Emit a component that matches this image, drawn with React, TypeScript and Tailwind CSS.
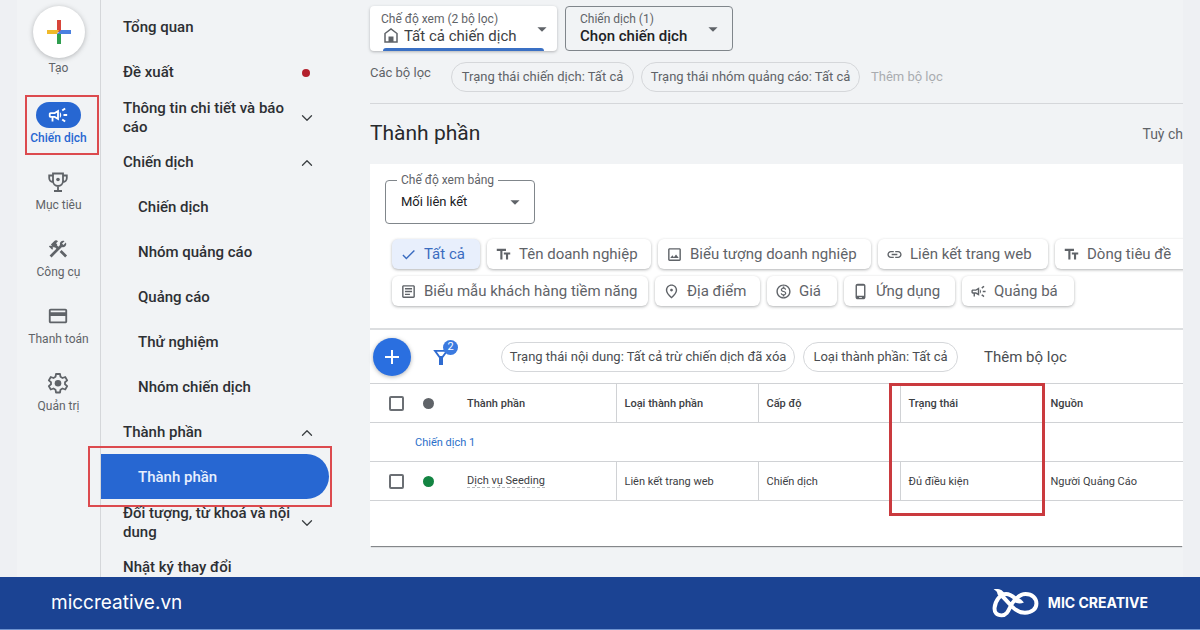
import type { ReactNode } from 'react';
import {
  MdAdd, MdArrowDropDown, MdCheck, MdConstruction, MdLink, MdOutlineArticle, MdOutlineCampaign, MdOutlineCreditCard,
  MdOutlineImage, MdOutlineMonetizationOn, MdOutlinePhoneAndroid, MdOutlinePlace, MdTextFields,
} from 'react-icons/md';
import { ChevronDown, ChevronUp } from 'lucide-react';

function TrophyIcon() {
  return (
    <svg viewBox="0 0 24 24" className="h-6 w-6" fill="none" stroke="currentColor" strokeWidth="1.800">
      <path d="M7 3.500h10V11a5 5 0 0 1-10 0V3.500zM7 5.500H3.200V8A4 4 0 0 0 7 12M17 5.500h3.800V8A4 4 0 0 1 17 12M12 16v5M8 21h8" />
      <circle cx="12" cy="9.500" r="1.800" fill="currentColor" stroke="none" />
    </svg>
  );
}

function GearIcon() {
  return (
    <svg viewBox="0 0 24 24" className="h-6 w-6" fill="none" stroke="currentColor" strokeWidth="1.800" strokeLinejoin="round">
      <path d="M10 3h4l.5 2.800 2 1.200 2.700-1 2 3.400-2.200 1.800v2.100l2.200 1.800-2 3.400-2.700-1-2 1.200L14 21.500h-4l-.5-2.800-2-1.200-2.700 1-2-3.400L5 13.300v-2.100L2.800 9.400l2-3.400 2.700 1 2-1.200z" />
      <circle cx="12" cy="12.200" r="3.300" fill="currentColor" stroke="none" />
    </svg>
  );
}

function HomeIcon() {
  return (
    <svg viewBox="0 0 14 15" className="h-[15px] w-[14px] text-[#5f6368]" fill="none" stroke="currentColor" strokeWidth="1.500">
      <path d="M1 5.500 7 1l6 4.500V14H1z" />
      <path d="M4.500 14V8.500h5V14z" fill="currentColor" stroke="none" />
    </svg>
  );
}

function FunnelIcon() {
  return (
    <svg viewBox="0 0 20 20" className="h-5 w-5" fill="none" stroke="currentColor" strokeWidth="1.800">
      <path d="M4 3.900h12L11.500 10h-3z" />
      <path d="M8 9h4v9H8z" fill="currentColor" stroke="none" />
    </svg>
  );
}

function GooglePlus() {
  return (
    <svg viewBox="0 0 24 24" className="h-6 w-6">
      <path d="M10 0h4v12h-4z" fill="#d8453a" />
      <path d="M0 10h12l-2 4H0z" fill="#f0b92a" />
      <path d="M10 14l4-2v12h-4z" fill="#2f9e4f" />
      <path d="M14 10h10v4H10z" fill="#4a80e0" />
    </svg>
  );
}

function MicLogo() {
  return (
    <svg viewBox="0 0 141 88" className="h-[29px] w-[47px]" fill="none" stroke="#fff" strokeWidth="12" strokeLinecap="round">
      <path d="M22 14C34 24 47 40 61 54c13 13 24 18 38 18 22 0 35-12 35-28S121 15 101 15C82 15 71 28 60 44 50 62 46 80 28 80 13 80 6 71 7 57 9 36 24 15 42 15c12 0 20 7 28 14" />
      <path d="M4 1c16-3 30 2 34 16-12 3-20 0-23-6C13 7 9 4 4 1z" fill="#fff" stroke="none" />
      <path d="M64 22c14 4 25 10 32 19-11 5-23 4-34-5z" fill="#fff" stroke="none" />
    </svg>
  );
}

const railItems: { label: string; icon: ReactNode; active?: boolean }[] = [
  { label: 'Chiến dịch', icon: <MdOutlineCampaign className="h-[22px] w-[22px]" />, active: true },
  { label: 'Mục tiêu', icon: <TrophyIcon /> },
  { label: 'Công cụ', icon: <MdConstruction className="h-[22px] w-[22px]" /> },
  { label: 'Thanh toán', icon: <MdOutlineCreditCard className="h-[22px] w-[22px]" /> },
  { label: 'Quản trị', icon: <GearIcon /> },
];

const menuItems: { label: string; sub?: boolean; dot?: boolean; open?: boolean; active?: boolean }[] = [
  { label: 'Tổng quan' },
  { label: 'Đề xuất', dot: true },
  { label: 'Thông tin chi tiết và báo cáo', open: false },
  { label: 'Chiến dịch', open: true },
  { label: 'Chiến dịch', sub: true },
  { label: 'Nhóm quảng cáo', sub: true },
  { label: 'Quảng cáo', sub: true },
  { label: 'Thử nghiệm', sub: true },
  { label: 'Nhóm chiến dịch', sub: true },
  { label: 'Thành phần', open: true },
  { label: 'Thành phần', sub: true, active: true },
  { label: 'Đối tượng, từ khoá và nội dung', open: false },
  { label: 'Nhật ký thay đổi' },
];

const assetRows = [
  [
    { label: 'Tất cả', icon: MdCheck, width: 'w-[88px]', active: true },
    { label: 'Tên doanh nghiệp', icon: MdTextFields, width: 'w-[164px]' },
    { label: 'Biểu tượng doanh nghiệp', icon: MdOutlineImage, width: 'w-[213px]' },
    { label: 'Liên kết trang web', icon: MdLink, width: 'w-[170px]' },
    { label: 'Dòng tiêu đề', icon: MdTextFields, width: 'w-[140px]' },
  ],
  [
    { label: 'Biểu mẫu khách hàng tiềm năng', icon: MdOutlineArticle, width: 'w-[256px]' },
    { label: 'Địa điểm', icon: MdOutlinePlace, width: 'w-[105px]' },
    { label: 'Giá', icon: MdOutlineMonetizationOn, width: 'w-[70px]' },
    { label: 'Ứng dụng', icon: MdOutlinePhoneAndroid, width: 'w-[111px]' },
    { label: 'Quảng bá', icon: MdOutlineCampaign, width: 'w-[112px]' },
  ],
];

function Rail() {
  return (
    <nav className="flex w-[84px] shrink-0 flex-col items-center border-r border-[#d5d7da] bg-[#f1f3f5] pt-1.5 text-xs font-[450] text-[#5f6368]">
      <button className="mb-6 flex flex-col items-center">
        <span className="flex h-[52px] w-[52px] items-center justify-center rounded-full bg-white shadow-[0_1px_5px_rgba(60,64,67,0.35)]">
          <GooglePlus />
        </span>
        <span className="leading-5">Tạo</span>
      </button>
      <div className="flex flex-col items-center gap-[21px]">
        {railItems.map((item) => (
          <a key={item.label} href="#" className="relative flex flex-col items-center whitespace-nowrap">
            <span className={item.active ? 'flex h-[26px] w-[45px] items-center justify-center rounded-full bg-[#2767d2] text-white' : 'flex h-[26px] items-center'}>{item.icon}</span>
            <span className={item.active ? 'leading-5 font-medium text-[#2767d2]' : 'leading-5'}>{item.label}</span>
            {item.active && <span className="pointer-events-none absolute -top-[7px] -right-3 -bottom-[7px] w-[74px] border-2 border-[#dc4a4e]" />}
          </a>
        ))}
      </div>
    </nav>
  );
}

function SideMenu() {
  return (
    <nav className="w-[269px] shrink-0 bg-[#f1f3f5] pt-1 pr-[41px] text-[15px] leading-[19px] font-medium text-[#2d2f33]">
      {menuItems.map((item, i) => (
        <a
          key={i}
          href="#"
          className={`relative flex h-[45px] items-center justify-between pt-0.5 pr-3 ${item.sub ? 'pl-[37px]' : 'pl-[22px]'} ${item.active ? 'rounded-r-full bg-[#2767d2] text-[#e8f0fe]' : ''}`}
        >
          <span className={item.sub ? '' : 'w-[170px]'}>{item.label}</span>
          {item.dot && <span className="mr-[7px] h-2 w-2 rounded-full bg-[#b3202c]" />}
          {item.open === true && <ChevronUp className="h-[18px] w-5 text-[#3c4043]" strokeWidth={1.75} />}
          {item.open === false && <ChevronDown className="h-[18px] w-5 text-[#3c4043]" strokeWidth={1.75} />}
          {item.active && <span className="pointer-events-none absolute -top-2 -right-[3px] -bottom-2 -left-[13px] border-2 border-[#dc4a4e]" />}
        </a>
      ))}
    </nav>
  );
}

function ScopeBar() {
  return (
    <div className="flex gap-2 pt-1.5">
      <div className="relative flex h-[45px] w-[187px] items-center justify-between rounded bg-white pr-1 pl-[11px] shadow-[0_1px_3px_rgba(60,64,67,0.35)]">
        <div>
          <label htmlFor="view" className="block text-xs leading-[15px] text-[#5f6368]">Chế độ xem (2 bộ lọc)</label>
          <div className="flex items-center gap-1.5 pb-px pl-[3px]">
            <HomeIcon />
            <select id="view" className="appearance-none text-[15px] leading-[18px] font-[450] text-[#3c4043]">
              <option>Tất cả chiến dịch</option>
            </select>
          </div>
        </div>
        <MdArrowDropDown className="h-[22px] w-[22px] shrink-0 text-[#5f6368]" />
        <span className="absolute bottom-0 left-[13px] h-[3px] w-[161px] rounded-t bg-[#3a70c4]" />
      </div>
      <div className="flex h-[45px] w-[168px] items-center justify-between rounded border border-[#80868b] pr-2 pl-[14px]">
        <div>
          <label htmlFor="campaign" className="block text-xs leading-[15px] text-[#5f6368]">Chiến dịch (1)</label>
          <select id="campaign" className="block appearance-none text-[15px] leading-[18px] font-medium text-[#202124]">
            <option>Chọn chiến dịch</option>
          </select>
        </div>
        <MdArrowDropDown className="h-[22px] w-[22px] shrink-0 text-[#5f6368]" />
      </div>
    </div>
  );
}

function AssetTable() {
  const head = 'border-l border-[#d0d2d5] pt-0.5 pl-2 text-left font-medium text-[#3c4043]';
  const cell = 'border-l border-[#d0d2d5] pt-0.5 pl-2';
  const box = 'block h-[15px] w-[15px] appearance-none rounded-xs border-2 border-[#6b6f74] bg-white';
  return (
    <table className="w-full table-fixed border-collapse text-[11px] text-[#3c4043]">
      <colgroup>
        <col className="w-[42px]" />
        <col className="w-[47px]" />
        <col className="w-[157px]" />
        <col className="w-[142px]" />
        <col className="w-[142px]" />
        <col className="w-[142px]" />
        <col />
      </colgroup>
      <thead>
        <tr className="h-[39px] border-y border-[#d0d2d5]">
          <th className="pl-[19px]"><input type="checkbox" aria-label="Chọn tất cả" className={box} /></th>
          <th className="pl-[11px]"><span className="block h-[11px] w-[11px] rounded-full bg-[#5f6368]" /></th>
          <th className="pt-0.5 pl-2 text-left font-medium text-[#3c4043]">Thành phần</th>
          <th className={head}>Loại thành phần</th>
          <th className={head}>Cấp độ</th>
          <th className={`relative ${head}`}>
            Trạng thái
            <span className="pointer-events-none absolute -top-px -right-[3px] -left-3 h-[133px] border-3 border-[#ca3a3e]" />
          </th>
          <th className={head}>Nguồn</th>
        </tr>
      </thead>
      <tbody>
        <tr className="h-[39px] border-y border-[#d0d2d5]">
          <td colSpan={7} className="pt-0.5 pl-[45px]"><a href="#" className="text-[#2a6fc9]">Chiến dịch 1</a></td>
        </tr>
        <tr className="h-[39px] border-b border-[#d0d2d5]">
          <td className="pl-[19px]"><input type="checkbox" aria-label="Dịch vụ Seeding" className={box} /></td>
          <td className="pl-[11px]"><span className="block h-[11px] w-[11px] rounded-full bg-[#138442]" /></td>
          <td className="pl-2"><span className="border-b border-dashed border-[#b5b8bc]">Dịch vụ Seeding</span></td>
          <td className={cell}>Liên kết trang web</td>
          <td className={cell}>Chiến dịch</td>
          <td className={cell}>Đủ điều kiện</td>
          <td className={cell}>Người Quảng Cáo</td>
        </tr>
      </tbody>
    </table>
  );
}

function AssetPanel() {
  return (
    <section className="bg-white pt-[11px] pb-[45px] shadow-[0_2px_1px_-1px_rgba(60,64,67,0.6)]">
      <fieldset className="ml-[15px] h-[49px] w-[150px] rounded border border-[#80868b] pr-2 pl-[15px]">
        <legend className="-ml-1 px-1 text-xs leading-[10px] text-[#5f6368]"><label htmlFor="table-view">Chế độ xem bảng</label></legend>
        <div className="flex h-[34px] items-center justify-between">
          <select id="table-view" className="appearance-none text-[13px] font-[450] text-[#202124]">
            <option>Mối liên kết</option>
          </select>
          <MdArrowDropDown className="h-[22px] w-[22px] text-[#5f6368]" />
        </div>
      </fieldset>

      <div className="mt-[15px] ml-[22px] flex flex-col gap-[7px]">
        {assetRows.map((row, i) => (
          <div key={i} className="flex gap-[7px]">
            {row.map(({ label, icon: Icon, width, active }: { label: string; icon: typeof MdCheck; width: string; active?: boolean }) => (
              <button
                key={label}
                className={`flex h-[30px] shrink-0 items-center gap-[7px] rounded-md pl-2 text-[15px] whitespace-nowrap shadow-[0_1px_3px_rgba(60,64,67,0.4)] ${width} ${active ? 'bg-[#e8effc] text-[#3a6cc0]' : 'bg-white text-[#5f6368]'}`}
              >
                <Icon className="h-[17px] w-[17px] shrink-0" />
                {label}
              </button>
            ))}
          </div>
        ))}
      </div>

      <div className="mt-[22px] flex h-[55px] items-center border-t-2 border-[#dcdee0] pl-[3px] text-[#4a4d51]">
        <button aria-label="Thêm thành phần" className="flex h-[38px] w-[38px] items-center justify-center rounded-full bg-[#2a6fe0] text-white shadow-[0_1px_4px_rgba(60,64,67,0.4)]">
          <MdAdd className="h-6 w-6" />
        </button>
        <button aria-label="Bộ lọc" className="relative ml-5 text-[#2f6bd0]">
          <FunnelIcon />
          <span className="absolute -top-[7px] left-[12px] flex h-[15px] w-[15px] items-center justify-center rounded-full bg-[#3b7ae0] text-[11px] text-white">2</span>
        </button>
        <button className="ml-[50px] h-[30px] w-[294px] rounded-full border border-[#d5d7da] text-[13px] font-[450] whitespace-nowrap">Trạng thái nội dung: Tất cả trừ chiến dịch đã xóa</button>
        <button className="ml-2 h-[30px] w-[155px] rounded-full border border-[#d5d7da] text-[13px] font-[450] whitespace-nowrap">Loại thành phần: Tất cả</button>
        <button className="ml-[26px] pt-0.5 text-[15px] whitespace-nowrap">Thêm bộ lọc</button>
      </div>

      <AssetTable />
    </section>
  );
}

export default function App() {
  return (
    <div className="flex h-screen flex-col overflow-hidden bg-[#eef0f3] font-['Roboto','Noto_Sans',sans-serif]">
      <div className="flex min-h-0 flex-1 overflow-hidden px-[17px]">
        <Rail />
        <SideMenu />
        <main className="-ml-1 min-w-0 flex-1 overflow-hidden bg-[#f1f3f5] pl-1">
          <ScopeBar />
          <div className="mt-[11px] flex h-[42px] border-b border-[#d5d7da] text-[13px] whitespace-nowrap text-[#5f6368]">
            <span className="w-[81px] pt-px">Các bộ lọc</span>
            <button className="h-[30px] w-[183px] rounded-full border border-[#d5d7da] font-[450]">Trạng thái chiến dịch: Tất cả</button>
            <button className="ml-[7px] h-[30px] w-[219px] rounded-full border border-[#d5d7da] font-[450]">Trạng thái nhóm quảng cáo: Tất cả</button>
            <button className="ml-[11px] h-[30px] text-[#a9acb0]">Thêm bộ lọc</button>
          </div>
          <div className="flex h-[60px] items-center justify-between">
            <h1 className="text-[21px] text-[#27292c]">Thành phần</h1>
            <button className="text-sm text-[#5f6368]">Tuỳ ch</button>
          </div>
          <AssetPanel />
        </main>
      </div>

      <footer className="flex h-[53px] shrink-0 items-center justify-between border-b border-[#6f93cf] bg-[#1b4393] pr-[52px] pl-[51px] text-white">
        <a href="#" className="font-['Inter',sans-serif] text-[19px] leading-6">miccreative.vn</a>
        <div className="flex items-center gap-[9px]">
          <MicLogo />
          <span className="font-['Inter',sans-serif] text-sm font-bold">MIC CREATIVE</span>
        </div>
      </footer>
    </div>
  );
}
